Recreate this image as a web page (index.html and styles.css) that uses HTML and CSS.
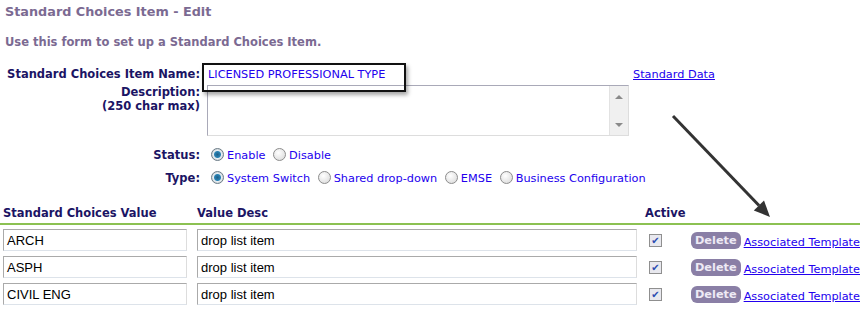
FILE: index.html
```html
<!DOCTYPE html>
<html lang="en">
<head>
    <meta charset="UTF-8">
    <title>Standard Choices Item - Edit</title>
    <link rel="stylesheet" href="styles.css">
</head>
<body>
    <h1 class="page-title">Standard Choices Item - Edit</h1>
    <p class="intro">Use this form to set up a Standard Choices Item.</p>

    <div class="form-area">
        <table class="form-table">
            <tr>
                <td class="label">Standard Choices Item Name:</td>
                <td class="field">
                    <span class="name-box">LICENSED PROFESSIONAL TYPE</span>
                </td>
                <td class="side"><a href="#">Standard Data</a></td>
            </tr>
            <tr>
                <td class="label top">Description:<br>(250 char max)</td>
                <td class="field">
                    <div class="textarea">
                        <div class="scroll">
                            <span class="up"></span>
                            <span class="down"></span>
                        </div>
                    </div>
                </td>
                <td></td>
            </tr>
            <tr class="radio-row first">
                <td class="label">Status:</td>
                <td class="field" colspan="2">
                    <span class="radio on"></span><span class="opt">Enable</span>
                    <span class="radio"></span><span class="opt">Disable</span>
                </td>
            </tr>
            <tr class="radio-row">
                <td class="label">Type:</td>
                <td class="field" colspan="2">
                    <span class="radio on"></span><span class="opt">System Switch</span>
                    <span class="radio"></span><span class="opt">Shared drop-down</span>
                    <span class="radio"></span><span class="opt">EMSE</span>
                    <span class="radio"></span><span class="opt">Business Configuration</span>
                </td>
            </tr>
        </table>

        <!-- annotation arrow -->
        <svg class="arrow" width="110" height="110" viewBox="0 0 110 110">
            <line x1="3" y1="3" x2="89" y2="92.5" stroke="#333" stroke-width="3"/>
            <polygon points="100,104 83.8,97.4 94,87.6" fill="#333"/>
        </svg>
    </div>

    <table class="values">
        <colgroup>
            <col class="w-value">
            <col class="w-desc">
            <col class="w-active">
            <col>
        </colgroup>
        <thead>
            <tr>
                <th>Standard Choices Value</th>
                <th class="c-desc">Value Desc</th>
                <th class="c-active">Active</th>
                <th></th>
            </tr>
        </thead>
        <tbody>
            <tr>
                <td><div class="input short">ARCH</div></td>
                <td class="desc-cell"><div class="input long">drop list item</div></td>
                <td class="check-cell"><span class="check">&#10004;</span></td>
                <td class="actions"><span class="delete">Delete</span><a href="#">Associated Template</a></td>
            </tr>
            <tr>
                <td><div class="input short">ASPH</div></td>
                <td class="desc-cell"><div class="input long">drop list item</div></td>
                <td class="check-cell"><span class="check">&#10004;</span></td>
                <td class="actions"><span class="delete">Delete</span><a href="#">Associated Template</a></td>
            </tr>
            <tr>
                <td><div class="input short">CIVIL ENG</div></td>
                <td class="desc-cell"><div class="input long">drop list item</div></td>
                <td class="check-cell"><span class="check">&#10004;</span></td>
                <td class="actions"><span class="delete">Delete</span><a href="#">Associated Template</a></td>
            </tr>
        </tbody>
    </table>
</body>
</html>
```

FILE: styles.css
```css
body {
    margin: 0;
    font-family: "DejaVu Sans", Verdana, sans-serif;
    font-size: 11.3px;
    color: #1b1464;
    background: #fff;
}
a {
    color: #2200ee;
}
.page-title {
    margin: 0;
    padding: 4px 0 0 5px;
    font-size: 12.8px;
    font-weight: bold;
    color: #7b6a92;
    height: 16px;
    line-height: 16px;
}
.intro {
    margin: 15px 0 0 5px;
    font-size: 11.5px;
    font-weight: bold;
    color: #7b6a92;
    line-height: 14px;
}
.form-area {
    position: relative;
    margin-top: 14px;
}
.form-table {
    border-collapse: collapse;
}
.form-table td {
    padding: 0;
    vertical-align: middle;
}
.label {
    width: 200px;
    padding-right: 5px !important;
    text-align: right;
    font-size: 11.5px;
    font-weight: bold;
    color: #1b1464;
    white-space: nowrap;
}
.label.top {
    vertical-align: top !important;
    line-height: 14px;
}
.field {
    padding-left: 2px !important;
}
.side {
    padding-left: 4px !important;
}
.name-box {
    display: inline-block;
    margin: 0 0 -7px -5px;
    padding: 3px 19px 8px 4px;
    border: 2px solid #111;
    color: #2200ee;
    box-shadow: 2px 3px 4px rgba(0, 0, 0, 0.35);
    position: relative;
    z-index: 2;
    line-height: 14px;
}
.textarea {
    width: 420px;
    height: 49px;
    border: 1px solid #a9a9b8;
    border-right-color: #ddd;
    border-bottom-color: #ddd;
    display: flex;
    justify-content: flex-end;
}
.scroll {
    width: 18px;
    background: #f0f0f0;
    border-left: 1px solid #e2e2e2;
    display: flex;
    flex-direction: column;
    justify-content: space-between;
    align-items: center;
    padding: 9px 0 8px;
}
.up {
    width: 0;
    height: 0;
    border-left: 4px solid transparent;
    border-right: 4px solid transparent;
    border-bottom: 4px solid #8a8a8a;
}
.down {
    width: 0;
    height: 0;
    border-left: 4px solid transparent;
    border-right: 4px solid transparent;
    border-top: 4px solid #8a8a8a;
}
.radio-row td {
    height: 23px;
}
.radio-row.first td {
    padding-top: 7px;
}
.radio {
    display: inline-block;
    width: 11px;
    height: 11px;
    border-radius: 50%;
    border: 1px solid #8d8d8d;
    background: radial-gradient(circle at 40% 35%, #fff, #d6d6d6);
    vertical-align: -2px;
    margin: 0 3px 0 4px;
    box-sizing: content-box;
}
.radio.on {
    background: radial-gradient(circle, #1f5f86 0, #2a83b4 3px, #e8eef2 4px, #c8cfd4 6px);
    border-color: #6d7d88;
}
.opt {
    color: #2200ee;
}
.arrow {
    position: absolute;
    left: 670px;
    top: 50px;
}
.values {
    border-collapse: collapse;
    table-layout: fixed;
    width: 860px;
    margin-top: 17px;
}
.w-value {
    width: 187px;
}
.w-desc {
    width: 450px;
}
.w-active {
    width: 48px;
}
.values th {
    text-align: left;
    font-size: 11.5px;
    font-weight: bold;
    color: #1b1464;
    padding: 0 0 3px 3px;
    border-bottom: 2px solid #8cc152;
    line-height: 14px;
    white-space: nowrap;
}
.values th.c-desc {
    padding-left: 10px;
}
.values th.c-active {
    padding-left: 8px;
}
.values td {
    padding: 4px 0 1px 3px;
    vertical-align: middle;
}
.values td.desc-cell {
    padding-left: 10px;
}
.input {
    box-sizing: border-box;
    height: 22px;
    border: 1px solid #aaa;
    border-right-color: #ddd;
    border-bottom-color: #dde3ea;
    font-family: "Liberation Sans", Arial, sans-serif;
    font-size: 13px;
    color: #000;
    padding: 3px 3px;
}
.input.short {
    width: 184px;
}
.input.long {
    width: 440px;
}
.values td.check-cell {
    padding-left: 12px;
}
.check {
    display: inline-block;
    width: 11px;
    height: 11px;
    border: 1px solid #8f8f8f;
    background: #e8e8ee;
    color: #2a4bb0;
    font-size: 10px;
    line-height: 11px;
    text-align: center;
}
.values td.actions {
    white-space: nowrap;
    text-align: right;
    padding-left: 0;
}
.delete {
    display: inline-block;
    background: #8a7fa6;
    color: #eeeaf5;
    font-weight: bold;
    border-radius: 6px;
    padding: 2px 4px 2px;
    margin-right: 3px;
    vertical-align: 2px;
}
```
